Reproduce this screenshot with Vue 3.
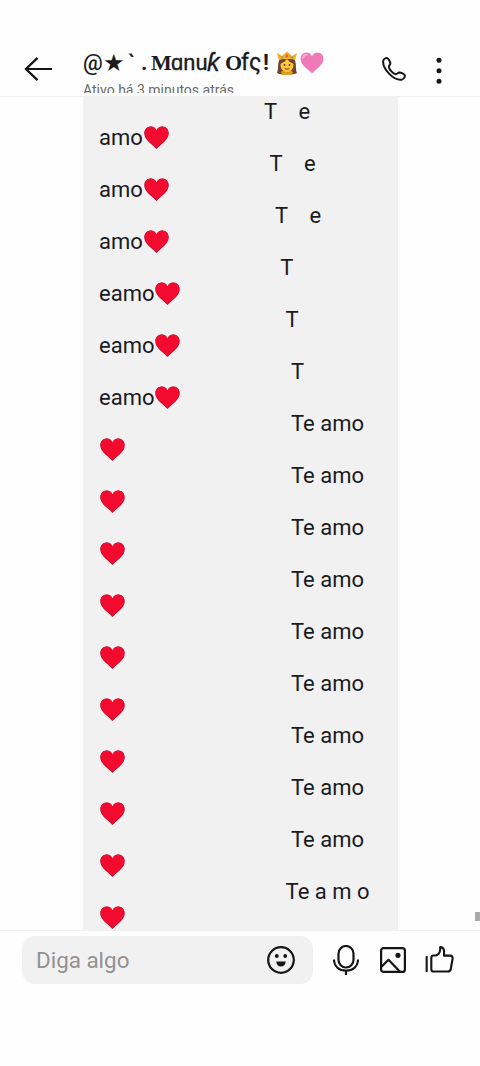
<script setup>
const heart = 'M12.5 23C9 18.8 0.4 14.3 0.3 7.5C0.2 3.5 3 0.5 6.5 0.5C9.3 0.5 11.5 2 12.5 4.5C13.5 2 15.7 0.5 18.5 0.5C22 0.5 24.8 3.5 24.7 7.5C24.6 14.3 16 18.8 12.5 23Z'

const messages = [
  { text: 'T    e', x: 264, tail: 'amo' },
  { text: 'T    e', x: 269.5, tail: 'amo' },
  { text: 'T    e', x: 275, tail: 'amo' },
  { text: 'T', x: 280.3, tail: 'eamo' },
  { text: 'T', x: 285.6, tail: 'eamo' },
  { text: 'T', x: 291, tail: 'eamo' },
  ...Array.from({ length: 9 }, () => ({ text: 'Te amo', x: 291, tail: '' })),
  { text: 'Te a m o', x: 285.6, tail: '' },
]
</script>

<template>
  <div class="screen">
    <header class="header">
      <svg class="back" viewBox="0 0 30 26" fill="none"><path d="M29 13H2M14 1.5L2 13L14 24.5" /></svg>
      <div class="heading">
        <div class="title">
          <span class="at">@</span><span class="star">★</span><span class="tick">`</span><span class="dot">.</span>
          <span class="big-m">M</span><span class="light-a">ɑnu</span><span class="kay">ƙ</span>
          <span class="big-o">O</span><span class="light-f">fς</span><span class="bang">!</span>
          <svg class="queen" viewBox="0 0 22 24">
            <path fill="#70432f" d="M4 8C1 12 3 17 1 22C4 24 8 23 11 23S18 24 21 22C19 17 21 12 18 8Z" />
            <path fill="#dc9b22" d="M5 21Q8 18 11 19Q14 18 17 21L16 24H6Z" />
            <ellipse cx="11" cy="14" rx="6.5" ry="7" fill="#ffca36" />
            <path fill="#70432f" d="M4 13Q8 12 11 8Q14 12 18 13L17 8H5Z" />
            <path fill="#f4aa1e" d="M1 2L6 5L11 0.5L16 5L21 2L19 9Q11 6 3 9Z" />
            <circle cx="11" cy="5" r="1.5" fill="#e75567" /><circle cx="6" cy="6.3" r="1" fill="#779bc8" /><circle cx="16" cy="6.3" r="1" fill="#779bc8" />
            <circle cx="8.5" cy="14" r="0.9" fill="#4c3528" /><circle cx="13.5" cy="14" r="0.9" fill="#4c3528" />
            <path d="M8.8 17.2Q11 19 13.2 17.2" stroke="#ad4b2d" stroke-width="1.2" fill="none" />
          </svg>
          <svg class="pink" viewBox="0 0 25 23.5"><path :d="heart" fill="#f07ab8" /><path d="M3 6Q4 3 7 3" stroke="#ffa8d3" stroke-width="2" fill="none" stroke-linecap="round" /></svg>
        </div>
        <div class="status">Ativo há 3 minutos atrás</div>
      </div>
      <svg class="phone" viewBox="0 0 24 24" fill="none"><path d="M1.2 3.7C1.5 2.2 3.5 0.9 5.1 1.1C6.5 1.5 8.2 4.6 8.4 6.3C8.4 7.9 6.6 8.5 6.9 10.2C7.5 12.8 10.8 16.4 13.3 17.1C15.1 17.5 15.8 15.5 17.4 15.4C19.2 15.4 22.2 17 22.8 18.4C23.2 20 21.4 22.3 19.6 22.7C11.7 23.7 0.2 11.8 1.2 3.7Z" /></svg>
      <svg class="more" viewBox="0 0 6 28"><circle cx="3" cy="3.2" r="2.5" /><circle cx="3" cy="13.8" r="2.5" /><circle cx="3" cy="24.3" r="2.5" /></svg>
    </header>

    <main class="chat">
      <div class="bubble">
        <template v-for="(m, i) in messages" :key="i">
          <div class="line" :style="{ paddingLeft: m.x - 83 + 'px' }">{{ m.text }}</div>
          <div class="line tail">
            <span v-if="m.tail">{{ m.tail }}</span>
            <svg class="heart" viewBox="0 0 25 23.5">
              <path :d="heart" fill="#a91034" />
              <path :d="heart" fill="#f20b2e" transform="translate(.3 0) scale(.976 .96)" />
            </svg>
          </div>
        </template>
      </div>
      <i class="thumb"></i>
    </main>

    <footer class="composer">
      <div class="field">
        <span>Diga algo</span>
        <svg class="smile" viewBox="0 0 28 28" fill="none">
          <circle cx="14" cy="14" r="12.8" stroke="#151517" stroke-width="2.2" />
          <circle cx="9.8" cy="10" r="1.9" fill="#151517" /><circle cx="18.2" cy="10" r="1.9" fill="#151517" />
          <path d="M9.3 15.4H18.7C18.5 18.7 16.7 20.4 14 20.4S9.5 18.7 9.3 15.4Z" fill="#151517" />
        </svg>
      </div>
      <svg class="mic" viewBox="0 0 26 30" fill="none"><rect x="5.5" y="1" width="15" height="21.5" rx="7.5" /><path d="M1 14.5C1 21.5 6 25.7 13 25.7S25 21.5 25 14.5M13 25.7V30" /></svg>
      <svg class="image" viewBox="0 0 26 26" fill="none"><rect x="1.1" y="1.1" width="23.8" height="23.8" rx="2.5" /><path d="M1.5 19.7L8.5 12.8L20 24.8" /><circle cx="18" cy="8.3" r="1.5" fill="#151517" /></svg>
      <svg class="like" viewBox="0 0 30 28" fill="none"><path d="M1.7 10.5V27M9 26.5H23.5C25.3 26.5 26.4 25.5 26.7 23.9L28.6 13C28.9 11.2 27.8 10 26 10H19.7V5.3C19.7 2.8 18.3 1.2 15.7 1.2V3.8C15.5 7 13.3 9.8 10.5 9.8H9C7.3 9.8 6.5 10.8 6.5 12.3V24C6.5 25.7 7.3 26.5 9 26.5" /></svg>
    </footer>
  </div>
</template>

<style>
body { background: #fefefe; }
</style>

<style scoped>
* { box-sizing: border-box; }
.screen { width: 480px; height: 1066px; overflow: hidden; background: #fefefe; color: #1b1b1d; font-family: Roboto, sans-serif; display: flex; flex-direction: column; }
svg { display: block; flex: none; }
.header { height: 97px; flex: none; border-bottom: 1px solid #f1f1f1; display: flex; padding: 45px 0 0 24px; }
.back { width: 29px; height: 26px; margin-top: 11px; stroke: #151517; stroke-width: 2.3; }
.heading { width: 300px; height: 48px; margin-left: 30px; overflow: hidden; }
.title { height: 36px; display: flex; align-items: center; font-size: 22px; line-height: 34px; white-space: nowrap; }
.title span { flex: none; }
.at { width: 20px; font-weight: 500; }
.star { width: 25px; font-family: "DejaVu Sans", sans-serif; font-size: 24px; }
.tick { width: 13px; font-weight: 500; }
.dot { width: 10px; font-weight: 700; }
.big-m, .big-o { font-family: "Liberation Serif", serif; font-size: 22px; font-weight: 700; }
.big-m { width: 20px; }
.light-a { width: 36px; font-size: 22px; -webkit-text-stroke: .35px; }
.kay { width: 18px; font-size: 25px; font-style: italic; -webkit-text-stroke: .35px; }
.big-o { width: 16px; }
.light-f { width: 22px; font-size: 23px; -webkit-text-stroke: .35px; }
.bang { width: 12px; font-weight: 700; }
.queen { width: 22px; height: 24px; margin-left: 1px; }
.pink { width: 24px; height: 22px; margin-left: 2px; }
.status { font-size: 14px; line-height: 18px; color: #68686a; }
.phone { width: 24px; height: 24px; margin: 12px 0 0 -1px; stroke: #151517; stroke-width: 2; }
.more { width: 6px; height: 28px; margin: 12px 0 0 30px; fill: #151517; }
.chat { height: 834px; flex: none; position: relative; border-bottom: 1px solid #f0f0f1; overflow: hidden; }
.bubble { width: 315px; margin-left: 83px; height: 834px; padding-top: 2px; background: #f1f1f2; }
.line { height: 26px; line-height: 26px; font-size: 22px; white-space: pre; }
.tail { display: flex; align-items: center; padding-left: 16px; }
.heart { width: 25px; height: 23.5px; margin-left: 1px; }
.thumb { position: absolute; right: 0; top: 815px; width: 5px; height: 9px; background: #aaa; }
.composer { display: flex; padding: 5px 0 0 22px; }
.field { width: 291px; height: 48px; background: #f1f1f1; border-radius: 13px; display: flex; align-items: center; justify-content: space-between; padding: 0 18px 0 14px; color: #929292; font-size: 22.4px; }
.smile { width: 28px; height: 28px; }
.mic, .image, .like { stroke: #151517; stroke-width: 2.2; stroke-linejoin: round; }
.mic { width: 26px; height: 30px; margin: 9px 0 0 20px; }
.image { width: 26px; height: 26px; margin: 11px 0 0 21px; }
.like { width: 29px; height: 27px; margin: 10px 0 0 19px; }
</style>
